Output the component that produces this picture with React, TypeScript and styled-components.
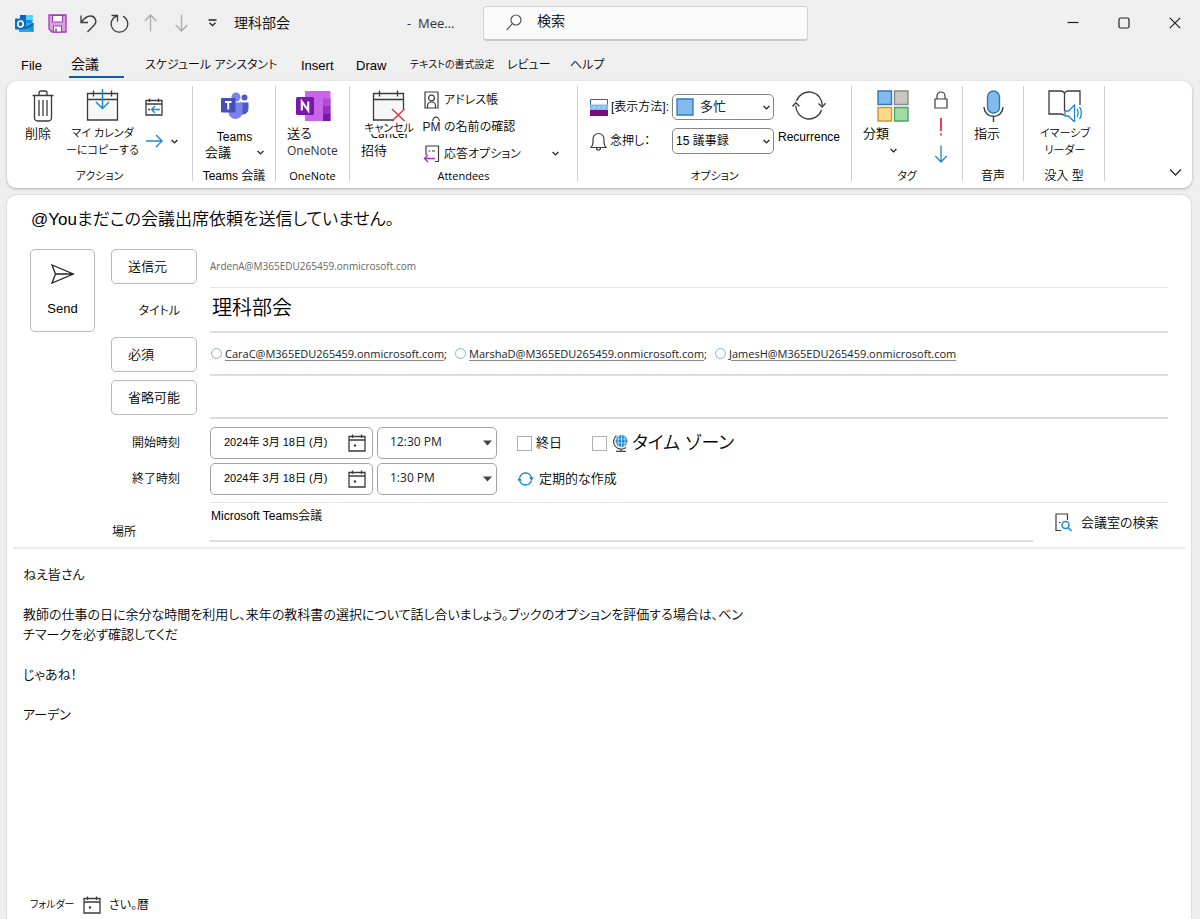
import React from "react";
import styled, { createGlobalStyle } from "styled-components";

const jp = `"Liberation Sans", "Noto Sans CJK JP", sans-serif`;
const ui = `"Open Sans", "Noto Sans", "Noto Sans CJK JP", sans-serif`;

const GlobalStyle = createGlobalStyle`
  *, *::before, *::after { box-sizing: border-box; }
  body {
    margin: 0;
    background: #efefef;
    color: #000;
    font-family: ${jp};
    font-size: 13px;
    font-weight: 350;
    line-height: 16px;
    font-feature-settings: "palt";
  }
  button, input, select, textarea {
    margin: 0;
    padding: 0;
    border: 0;
    border-radius: 0;
    background: none;
    color: inherit;
    font: inherit;
    font-feature-settings: "palt";
    outline: none;
  }
  button { cursor: pointer; white-space: nowrap; }
  svg { display: block; flex: none; }
`;

const Page = styled.div`
  display: flex;
  flex-direction: column;
  min-height: 100vh;
`;

/* ---------- title bar ---------- */

const TitleBar = styled.header`
  display: grid;
  grid-template-columns: 483px 325px 1fr;
  height: 46px;
  align-items: center;
`;

const QuickAccess = styled.div`
  display: flex;
  align-items: center;
  padding-left: 7px;
`;

const QuickButton = styled.button<{ $wide?: boolean }>`
  display: flex;
  justify-content: center;
  width: ${(p) => (p.$wide ? "35px" : "31px")};
`;

const DocTitle = styled.span`
  width: 179px;
  padding-left: 6px;
  font-size: 14px;
`;

const DocKind = styled.span`
  font-family: ${ui};
  font-size: 13px;
  font-weight: 400;
  color: #333;
  white-space: pre;
`;

const SearchBox = styled.label`
  display: flex;
  align-items: center;
  gap: 15px;
  height: 35px;
  padding-left: 22px;
  border: 1px solid #d2d2d2;
  border-bottom: 2px solid #c8c8c8;
  border-radius: 4px;
  background: #fafafa;
`;

const SearchInput = styled.input`
  flex: 1;
  min-width: 0;
  height: 28px;
  padding-bottom: 4px;
  font-size: 14px;
  &::placeholder { color: #000; opacity: 1; }
`;

const WindowControls = styled.div`
  display: flex;
  justify-content: flex-end;
`;

const WindowButton = styled.button`
  display: flex;
  justify-content: center;
  width: 51px;
`;

/* ---------- tabs ---------- */

const Tabs = styled.nav`
  display: grid;
  grid-template-columns: 48px 76px 156px 55px 54px 97px 63px auto;
  justify-content: start;
  padding-left: 21px;
  height: 35px;
  align-items: start;
`;

const Tab = styled.button<{ $active?: boolean; $small?: boolean }>`
  justify-self: start;
  height: 32px;
  min-width: ${(p) => (p.$active ? "55px" : "0")};
  padding: ${(p) => (p.$active ? "6px 2px 0" : "8px 0 0")};
  border-bottom: 2px solid ${(p) => (p.$active ? "#0f5ab4" : "transparent")};
  font-size: ${(p) => (p.$active ? "14px" : p.$small ? "10px" : "12px")};
  text-align: left;
`;

const LatinTab = styled(Tab)`
  padding-top: 9px;
  font-size: 13px;
`;

/* ---------- ribbon ---------- */

const Ribbon = styled.section`
  display: flex;
  margin: 0 8px 7px 7px;
  padding: 5px 0 7px;
  border-radius: 9px;
  background: #fff;
  box-shadow: 0 1px 3px rgba(0, 0, 0, 0.28);
`;

const Group = styled.div<{ $width: number }>`
  display: flex;
  flex-direction: column;
  justify-content: space-between;
  width: ${(p) => p.$width}px;
  height: 95px;
  border-right: 1px solid #cfcfcf;
`;

const GroupBody = styled.div<{ $pad: number; $gap?: number }>`
  display: flex;
  align-items: flex-start;
  gap: ${(p) => p.$gap ?? 0}px;
  padding-left: ${(p) => p.$pad}px;
`;

const GroupLabel = styled.div<{ $ui?: boolean; $kana?: boolean }>`
  height: 12px;
  line-height: 14px;
  text-align: center;
  white-space: nowrap;
  font-family: ${(p) => (p.$ui ? ui : jp)};
  font-size: ${(p) => (p.$kana || p.$ui ? "11px" : "12px")};
  font-weight: ${(p) => (p.$ui ? 400 : 350)};
`;

const Tool = styled.button<{ $width: number }>`
  display: flex;
  flex-direction: column;
  align-items: center;
  width: ${(p) => p.$width}px;
  padding-top: 3px;
`;

const ToolIcon = styled.span`
  display: flex;
  align-items: center;
  justify-content: center;
  height: 33px;
`;

const ToolLabel = styled.span<{ $left?: boolean; $low?: boolean; $kana?: boolean }>`
  align-self: ${(p) => (p.$left ? "stretch" : "center")};
  padding-top: ${(p) => (p.$low ? "8px" : "3px")};
  font-size: ${(p) => (p.$kana ? "11px" : "13px")};
  line-height: ${(p) => (p.$low ? "14px" : "17px")};
  text-align: ${(p) => (p.$left ? "left" : "center")};
`;

const LatinLabel = styled.span`
  display: block;
  font-size: 12px;
  text-align: center;
`;

const CaretLine = styled.span<{ $center?: boolean }>`
  display: flex;
  align-items: center;
  justify-content: ${(p) => (p.$center ? "center" : "space-between")};
  height: 17px;
`;

const UiText = styled.span`
  font-family: ${ui};
  font-size: 12px;
  font-weight: 400;
  color: #333;
`;

const CancelLabel = styled.span`
  display: block;
  font-size: 11px;
  line-height: 12px;
`;

const CancelUnder = styled.span`
  display: flex;
  align-items: flex-end;
  align-self: center;
  height: 7px;
  overflow: hidden;
  font-family: ${ui};
  font-size: 12px;
  font-weight: 400;
  line-height: 14px;
`;

const InviteLabel = styled.span`
  align-self: flex-start;
  font-size: 13px;
  line-height: 20px;
`;

const IconColumn = styled.div`
  display: flex;
  flex-direction: column;
`;

const IconRow = styled.button<{ $tall?: boolean }>`
  display: flex;
  align-items: center;
  gap: 8px;
  height: ${(p) => (p.$tall ? "34px" : "27px")};
`;

const TopPad = styled.div`
  display: flex;
  flex-direction: column;
  padding-top: 4px;
`;

const ListRow = styled.button`
  display: flex;
  align-items: center;
  gap: 4px;
  width: 136px;
  height: 27px;
  font-size: 12px;
  text-align: left;
`;

const Slot = styled.span`
  display: flex;
  align-items: center;
  justify-content: center;
  width: 17px;
`;

const Grow = styled.span`
  flex: 1;
`;

const CheckNames = styled.span`
  position: relative;
  font-size: 12px;
  color: #14143c;
  svg { position: absolute; left: 9px; top: -3px; }
`;

const OptionRow = styled.div`
  display: grid;
  grid-template-columns: 82px 102px;
  align-items: center;
  height: 34px;
`;

const OptionLabel = styled.label`
  display: flex;
  align-items: center;
  gap: 3px;
  font-size: 12px;
  white-space: nowrap;
`;

const OptionBox = styled.span<{ $text?: boolean }>`
  display: flex;
  align-items: center;
  gap: 6px;
  height: 26px;
  padding: 0 3px;
  border: 1px solid #858585;
  border-radius: 5px;
  background: #fff;
  font-size: ${(p) => (p.$text ? "12px" : "13px")};
`;

const BareSelect = styled.select`
  flex: 1;
  min-width: 0;
  height: 20px;
  appearance: none;
`;

const CollapseCell = styled.div`
  display: flex;
  flex: 1;
  align-items: flex-end;
  justify-content: flex-end;
  padding: 0 10px 2px 0;
`;

/* ---------- meeting form ---------- */

const Card = styled.main`
  display: flex;
  flex: 1;
  flex-direction: column;
  margin: 0 9px 0 7px;
  border-radius: 9px 9px 0 0;
  background: #fff;
  box-shadow: 0 0 2px rgba(0, 0, 0, 0.25);
`;

const Notice = styled.h1`
  margin: 0;
  padding: 0 24px;
  font-size: 17px;
  font-weight: 350;
  line-height: 50px;
`;

const FormGrid = styled.div<{ $top?: number; $bottom?: number }>`
  display: grid;
  grid-template-columns: 65px 86px 1fr;
  column-gap: 16px;
  align-items: center;
  padding: ${(p) => p.$top ?? 0}px 23px ${(p) => p.$bottom ?? 0}px 23px;
`;

const SendButton = styled.button`
  grid-row: span 2;
  align-self: end;
  display: flex;
  flex-direction: column;
  align-items: center;
  justify-content: center;
  gap: 17px;
  height: 83px;
  margin-bottom: 1px;
  border: 1px solid #b8b8b8;
  border-radius: 5px;
`;

const FieldButton = styled.button`
  grid-column: 2;
  height: 35px;
  padding-left: 16px;
  border: 1px solid #b8b8b8;
  border-radius: 5px;
  text-align: left;
`;

const FieldLabel = styled.label`
  grid-column: 2;
  padding-right: 17px;
  font-size: 12px;
  text-align: right;
`;

const PlaceLabel = styled.label`
  grid-column: 2;
  align-self: end;
  padding: 0 0 2px 1px;
  font-size: 12px;
`;

const Field = styled.div<{ $soft?: boolean; $tall?: boolean }>`
  grid-column: 3;
  display: flex;
  align-items: center;
  min-width: 0;
  height: ${(p) => (p.$tall ? "45px" : "43px")};
  margin-left: -3px;
  border-bottom: ${(p) => (p.$soft ? "1px solid #e6e6e6" : "2px solid #dcdcdc")};
`;

const FromText = styled.span`
  font-family: ${ui};
  font-size: 10px;
  font-weight: 400;
  color: #666;
`;

const TitleInput = styled.input`
  flex: 1;
  min-width: 0;
  height: 30px;
  margin-bottom: 6px;
  padding-left: 2px;
  font-size: 20px;
`;

const Recipient = styled.span`
  display: flex;
  align-items: center;
  padding-right: 7px;
  font-family: ${ui};
  font-size: 11px;
  font-weight: 400;
  color: #222;
`;

const Presence = styled.span`
  width: 11px;
  height: 11px;
  margin: 0 3px 0 1px;
  border: 1px solid #86b4c8;
  border-radius: 50%;
`;

const RecipientLink = styled.a`
  color: inherit;
  text-decoration: underline;
  text-decoration-color: #8a8a8a;
  text-underline-offset: 2px;
`;

const TimeRow = styled.div`
  grid-column: 3;
  display: flex;
  align-items: center;
  height: 36px;
  margin-left: -3px;
`;

const PickerBox = styled.span<{ $width: number }>`
  display: flex;
  align-items: center;
  width: ${(p) => p.$width}px;
  height: 32px;
  margin-right: 4px;
  padding: 0 6px 0 13px;
  border: 1px solid #a3a3a3;
  border-radius: 5px;
`;

const TimeBox = styled(PickerBox)`
  padding: 0 4px 0 12px;
`;

const DateInput = styled.input`
  flex: 1;
  min-width: 0;
  height: 28px;
  padding-bottom: 4px;
  font-size: 11px;
  font-weight: 400;
`;

const TimeSelect = styled(BareSelect)`
  height: 26px;
  padding-bottom: 2px;
  font-family: ${ui};
  font-size: 12px;
  font-weight: 400;
  color: #222;
`;

const Check = styled.input`
  appearance: none;
  width: 15px;
  height: 15px;
  border: 1px solid #b0b0b0;
  background: #fff;
  &:checked { background: #0f6cbd; }
`;

const Extras = styled.div`
  display: flex;
  align-items: center;
  padding-left: 16px;
`;

const CheckLabel = styled.label<{ $large?: boolean }>`
  display: flex;
  align-items: center;
  gap: 4px;
  width: ${(p) => (p.$large ? "auto" : "75px")};
  font-size: ${(p) => (p.$large ? "18px" : "13px")};
  line-height: 24px;
  white-space: nowrap;
`;

const Globe = styled.span`
  padding-left: 2px;
`;

const InlineButton = styled.button`
  display: flex;
  align-items: center;
  gap: 5px;
`;

const PlaceRow = styled.div`
  grid-column: 3;
  display: flex;
  height: 40px;
  margin-left: -3px;
  border-top: 1px solid #e6e6e6;
`;

const PlaceInput = styled.input`
  flex: 1;
  min-width: 0;
  padding: 0 0 12px 1px;
  border-bottom: 2px solid #dcdcdc;
  font-size: 12px;
`;

const RoomFinder = styled.button`
  display: flex;
  align-items: center;
  gap: 9px;
  width: 113px;
  margin-left: 22px;
`;

const Divider = styled.hr`
  width: auto;
  margin: 5px 6px 0;
  border: 0;
  border-top: 2px solid #ececec;
`;

const Message = styled.textarea`
  flex: 1;
  min-height: 320px;
  margin: 16px 16px 0;
  resize: none;
  font-size: 13px;
  line-height: 20px;
`;

const Footer = styled.footer`
  display: flex;
  align-items: center;
  height: 28px;
  padding-left: 23px;
  font-size: 12px;
`;

const FooterFolder = styled.span`
  width: 53px;
  font-size: 10px;
`;

const FooterItem = styled.button`
  display: flex;
  align-items: center;
  gap: 8px;
`;

/* ---------- icons ---------- */

const ink = "#3b3b3b";
const blue = "#1f86d0";

const Caret = ({ size = 7 }: { size?: number }) => (
  <svg width={size} height={size} viewBox="0 0 8 8" fill="none" stroke="#222" strokeWidth={size > 8 ? 0.8 : 1.5}>
    <path d="M.7 2.2 4 5.6l3.3-3.4" />
  </svg>
);

const OutlookIcon = () => (
  <svg width="19" height="19" viewBox="0 0 19 19">
    <path d="M5 1h12.500v10H5z" fill="#1490df" />
    <path d="M11 1h6.500v5H11z" fill="#50d9ff" />
    <path d="M5 1h6v5H5z" fill="#0a63b4" />
    <path d="M4 9h14.500v9H4z" fill="#28a8ea" />
    <path d="m18.500 9-7 5 7 4z" fill="#1f8fd8" />
    <path d="M11 13.500 18.500 9v1.300L11.500 15z" fill="#0a4f91" />
    <rect x="0" y="4.500" width="11" height="11" rx="1" fill="#0f6cc4" />
    <ellipse cx="5.500" cy="10" rx="2.700" ry="3" fill="none" stroke="#fff" strokeWidth="1.600" />
  </svg>
);

const SaveIcon = () => (
  <svg width="19" height="19" viewBox="0 0 19 19">
    <path d="M1 1h17v17H4l-3-3z" fill="#d9a3e0" stroke="#a33bb0" strokeWidth="1.300" />
    <path d="M4.500 1.500h10V8h-10zM5.500 12h8v6h-8z" fill="#fff" stroke="#a33bb0" strokeWidth="1.100" />
    <path d="M8 14.500V18" stroke="#a33bb0" strokeWidth="1.500" />
  </svg>
);

const UndoIcon = () => (
  <svg width="19" height="19" viewBox="0 0 19 19" fill="none" stroke={ink} strokeWidth="1.300">
    <path d="M2 1.500v7h7M2.300 8.200C5 4.500 8 2 11.500 2a5.300 5.300 0 0 1 4 8.800L8.500 18" />
  </svg>
);

const RedoIcon = () => (
  <svg width="19" height="19" viewBox="0 0 19 19" fill="none" stroke={ink} strokeWidth="1.300">
    <path d="M1.500 1.500h6v6M7.300 1.900A8.300 8.300 0 1 0 13 2.400" />
  </svg>
);

const ArrowIcon = ({ dir, color = "#ababab", w = 13 }: { dir: "up" | "down"; color?: string; w?: number }) => (
  <svg width={w} height="18" viewBox="0 0 13 18" fill="none" stroke={color} strokeWidth="1.300">
    <path d={dir === "up" ? "M6.500 17.500V1M.800 7l5.700-6 5.700 6" : "M6.500.500V17M.800 11l5.700 6 5.700-6"} />
  </svg>
);

const CustomizeIcon = () => (
  <svg width="9" height="8" viewBox="0 0 9 8" fill="none" stroke="#222" strokeWidth="1.300">
    <path d="M.500 1h8M1.500 3.700l3 3 3-3" />
  </svg>
);

const SearchIcon = () => (
  <svg width="16" height="17" viewBox="0 0 16 17" fill="none" stroke="#555" strokeWidth="1.200">
    <circle cx="10" cy="6" r="5" />
    <path d="M6.300 9.700.700 16" />
  </svg>
);

const TrashIcon = () => (
  <svg width="22" height="32" viewBox="0 0 22 32" fill="none" stroke={ink} strokeWidth="1.300">
    <path d="M.500 5.500h21M7 5V3a2 2 0 0 1 2-2h4a2 2 0 0 1 2 2v2" />
    <path d="M2.500 5.500V28a3 3 0 0 0 3 3h11a3 3 0 0 0 3-3V5.500M7 10v16M11 10v16M15 10v16" />
  </svg>
);

const CalendarFrame = ({ children }: { children?: React.ReactNode }) => (
  <svg width="34" height="33" viewBox="0 0 34 33" fill="none" stroke={ink} strokeWidth="1.300">
    <path d="M1.500 4.500h30V31h-30z" fill="#f7f7f7" />
    <path d="M1.500 10.500h30M7.500 1.500v6M25.500 1.500v6" />
    {children}
  </svg>
);

const CopyCalendarIcon = () => (
  <CalendarFrame>
    <path d="M16.500 0v19M10 13l6.500 6.500L23 13" stroke={blue} strokeWidth="1.500" />
  </CalendarFrame>
);

const CancelIcon = () => (
  <CalendarFrame>
    <path d="M22 20h12v13H22z" fill="#fff" stroke="none" />
    <path d="m20 20 12.500 12M32.500 20 20 32" stroke="#e8343c" strokeWidth="1.500" />
  </CalendarFrame>
);

const SmallCalendarIcon = ({ arrow }: { arrow?: boolean }) => (
  <svg width="18" height="18" viewBox="0 0 18 18" fill="none" stroke={ink} strokeWidth="1.300">
    <path d="M1 2.500h16V17H1zM1 6h16M4.500.500v3.500M13.500.500v3.500" />
    {arrow ? (
      <path d="M15 11.500H7M10 8l-3.500 3.500L10 15" stroke={blue} strokeWidth="1.400" />
    ) : (
      <circle cx="7" cy="11.500" r="1.200" fill={ink} stroke="none" />
    )}
    {arrow && <circle cx="4" cy="11.500" r="1" fill={ink} stroke="none" />}
  </svg>
);

const ForwardIcon = () => (
  <svg width="18" height="14" viewBox="0 0 18 14" fill="none" stroke={blue} strokeWidth="1.400">
    <path d="M1 7h16M11 1l6 6-6 6" />
  </svg>
);

const TeamsIcon = () => (
  <svg width="28" height="28" viewBox="0 0 28 28">
    <circle cx="15" cy="5" r="4.500" fill="#7b83eb" />
    <circle cx="23.500" cy="5.500" r="3" fill="#5059c9" />
    <path d="M19 10.500h8.500V17a5.500 5.500 0 0 1-8.500 4.500z" fill="#5059c9" />
    <path d="M7.500 10.500h14V20a7 7 0 0 1-14 0z" fill="#7b83eb" />
    <rect x="0" y="6" width="14.500" height="14.500" rx="1.200" fill="#464eb8" />
    <path d="M4 10h6.500M7.250 10v7.500" stroke="#fff" strokeWidth="1.900" />
  </svg>
);

const OneNoteIcon = () => (
  <svg width="35" height="32" viewBox="0 0 35 32">
    <path d="M9 1h25.500v30H9z" fill="#ca64ea" />
    <path d="M27 8.500h7.500V16H27z" fill="#ae4bd5" />
    <path d="M27 16h7.500v7.500H27z" fill="#9332bf" />
    <path d="M27 23.500h7.500V31H27z" fill="#7719aa" />
    <rect x="0" y="7" width="18" height="18" rx="1.500" fill="#7719aa" />
    <path d="M5.800 20.500v-9l6.400 9v-9" fill="none" stroke="#fff" strokeWidth="2.100" />
  </svg>
);

const AddressIcon = () => (
  <svg width="15" height="18" viewBox="0 0 15 18" fill="none" stroke={ink} strokeWidth="1.200">
    <path d="M1 1h13v16H1zM3.500 17v-2.500c0-2 2-3.500 4-3.500s4 1.500 4 3.500V17" />
    <circle cx="7.500" cy="7" r="2.900" />
  </svg>
);

const NameHood = () => (
  <svg width="8" height="5" viewBox="0 0 8 5" fill="none" stroke={ink} strokeWidth="1.200">
    <path d="M.700 5a3.300 3.800 0 0 1 6.600 0" />
  </svg>
);

const ResponseIcon = () => (
  <svg width="17" height="18" viewBox="0 0 17 18" fill="none" stroke={ink} strokeWidth="1.200">
    <path d="M3 10V1h12.500v15.500H12" />
    <path d="M5.500 6h2M9 6h3" />
    <path d="M12 13.500H1.500M5 10l-3.500 3.500L5 17" stroke="#a637b5" strokeWidth="1.400" />
  </svg>
);

const ShowAsIcon = () => (
  <svg width="18" height="17" viewBox="0 0 18 17">
    <path d="M.500.500h17v6H.500z" fill="#fff" stroke="#1f6fb8" />
    <path d="M0 5.500h18V11H0z" fill="#7dbdec" />
    <path d="m3 9.500 2-2M8 9.500l2-2M13 9.500l2-2" stroke="#fff" strokeWidth="1" />
    <path d="M0 11h18v6H0z" fill="#7b0c7b" />
  </svg>
);

const BellIcon = () => (
  <svg width="17" height="19" viewBox="0 0 17 19" fill="none" stroke={ink} strokeWidth="1.200">
    <path d="M1 15.500c1.500-1.500 2-3 2-5V7a5.500 5.500 0 0 1 11 0v3.500c0 2 .500 3.500 2 5zM6.500 16a2 2 0 0 0 4 0" />
  </svg>
);

const BusyIcon = () => (
  <svg width="18" height="18" viewBox="0 0 18 18">
    <path d="M1 1h16v16H1z" fill="#83bcec" stroke="#2b78c0" strokeWidth="1.300" />
  </svg>
);

const RecurrenceIcon = () => (
  <svg width="34" height="29" viewBox="0 0 34 29" fill="none" stroke={ink} strokeWidth="1.300">
    <path d="M4.500 10A13.200 13.200 0 0 1 30.200 14.500M29.500 19A13.200 13.200 0 0 1 3.800 14.500" />
    <path d="m26.500 12.500 3.700 3.500 3.300-3.800M.500 15.500l3.300-3.800 3.700 3.500" />
  </svg>
);

const CategoriesIcon = () => (
  <svg width="32" height="32" viewBox="0 0 32 32" strokeWidth="1.400">
    <path d="M1 1h13.500v13.500H1z" fill="#83bcec" stroke="#2b78c0" />
    <path d="M17.500 1H31v13.500H17.500z" fill="#c8c6c4" stroke="#8a8886" />
    <path d="M1 17.500h13.500V31H1z" fill="#fbdb8d" stroke="#dd8f2f" />
    <path d="M17.500 17.500H31V31H17.500z" fill="#a1dda5" stroke="#4aa564" />
  </svg>
);

const LockIcon = () => (
  <svg width="14" height="18" viewBox="0 0 14 18" fill="none" stroke={ink} strokeWidth="1.200">
    <path d="M1 8h12v9H1zM3 8V5a4 4 0 0 1 8 0v3" />
  </svg>
);

const ImportantIcon = () => (
  <svg width="14" height="18" viewBox="0 0 14 18" stroke="#e81123" strokeWidth="1.600">
    <path d="M7 0v13M7 15.500v2" />
  </svg>
);

const MicIcon = () => (
  <svg width="21" height="32" viewBox="0 0 21 32" fill="none" stroke={ink} strokeWidth="1.400">
    <rect x="4.500" y="1" width="12" height="22" rx="6" fill="#83bcec" stroke="#2b78c0" />
    <path d="M1 17a9.500 9.500 0 0 0 19 0M10.500 26.500V32" />
  </svg>
);

const ReaderIcon = () => (
  <svg width="35" height="33" viewBox="0 0 35 33" fill="none" stroke={ink} strokeWidth="1.300">
    <path d="M16.500 26.500c-1-1-2-1.500-4-1.500H1V2h11.500c2 0 4 1 4 3 0-2 2-3 4-3H32v14M16.500 5v17" />
    <path d="M17 22h3.500l6-6v17l-6-6H17zM29 20c1.500 2 1.500 6 0 8M31.500 18c2.500 3 2.500 9 0 12" stroke={blue} />
  </svg>
);

const SendIcon = () => (
  <svg width="24" height="20" viewBox="0 0 24 20" fill="none" stroke="#222" strokeWidth="1.300">
    <path d="M1 1l21.500 9L1 19l3.500-9zM4.500 10H22" />
  </svg>
);

const TriangleIcon = () => (
  <svg width="9" height="6" viewBox="0 0 9 6">
    <path d="M0 .500h9l-4.500 5z" fill="#444" />
  </svg>
);

const GlobeIcon = () => (
  <svg width="15" height="18" viewBox="0 0 15 18" fill="none" stroke="#444" strokeWidth="1.200">
    <circle cx="8.500" cy="7" r="6" fill="#2288cf" stroke="none" />
    <path d="M3 5h11M3 9h11M8.500 1v12M6 2c-1.200 3-1.200 7 0 10M11 2c1.200 3 1.200 7 0 10" stroke="#cfe8f8" strokeWidth=".7" />
    <path d="M3.500 1.500a7.300 7.300 0 0 0 9.500 12M8 15v2M3 17.300h10" />
  </svg>
);

const RepeatIcon = () => (
  <svg width="17" height="14" viewBox="0 0 17 14" fill="none" stroke={blue} strokeWidth="1.500">
    <path d="M2.700 5.500A6 6 0 0 1 14.500 7M14.300 8.500A6 6 0 0 1 2.500 7" />
    <path d="M12 5.500h5l-2.500 3zM0 8.500h5L2.500 5.500z" fill={blue} stroke="none" />
  </svg>
);

const RoomIcon = () => (
  <svg width="17" height="19" viewBox="0 0 17 19" fill="none" stroke={ink} strokeWidth="1.200">
    <path d="M6 17.500H1V1h11.500v6M4 9.500h1.500" />
    <circle cx="10.500" cy="12" r="3.500" stroke={blue} strokeWidth="1.500" />
    <path d="m13 14.500 3.500 3.500" stroke={blue} strokeWidth="1.500" />
  </svg>
);

/* ---------- data ---------- */

const recipients = [
  "CaraC@M365EDU265459.onmicrosoft.com",
  "MarshaD@M365EDU265459.onmicrosoft.com",
  "JamesH@M365EDU265459.onmicrosoft.com",
];

const message = `ねえ皆さん

教師の仕事の日に余分な時間を利用し、来年の教科書の選択について話し合いましょう。ブックのオプションを評価する場合は、ベン
チマークを必ず確認してくだ

じゃあね！

アーデン`;

const DateTime = ({ id, date, time, name }: { id: string; date: string; time: string; name: string }) => (
  <>
    <PickerBox $width={163}>
      <DateInput id={id} defaultValue={date} />
      <button aria-label={`${name} カレンダー`}><SmallCalendarIcon /></button>
    </PickerBox>
    <TimeBox $width={120}>
      <TimeSelect aria-label={`${name} 時間`}><option>{time}</option></TimeSelect>
      <TriangleIcon />
    </TimeBox>
  </>
);

export default function App() {
  return (
    <Page>
      <GlobalStyle />
      <TitleBar>
        <QuickAccess>
          <QuickButton $wide aria-label="Outlook"><OutlookIcon /></QuickButton>
          <QuickButton aria-label="保存"><SaveIcon /></QuickButton>
          <QuickButton aria-label="元に戻す"><UndoIcon /></QuickButton>
          <QuickButton aria-label="やり直し"><RedoIcon /></QuickButton>
          <QuickButton aria-label="前へ"><ArrowIcon dir="up" /></QuickButton>
          <QuickButton aria-label="次へ"><ArrowIcon dir="down" /></QuickButton>
          <QuickButton aria-label="カスタマイズ"><CustomizeIcon /></QuickButton>
          <DocTitle>理科部会</DocTitle>
          <DocKind>-  Mee...</DocKind>
        </QuickAccess>
        <SearchBox>
          <SearchIcon />
          <SearchInput placeholder="検索" aria-label="検索" />
        </SearchBox>
        <WindowControls>
          <WindowButton aria-label="最小化">
            <svg width="12" height="12" viewBox="0 0 12 12" stroke="#222" strokeWidth="1.200"><path d="M.500 5.500h11" /></svg>
          </WindowButton>
          <WindowButton aria-label="最大化">
            <svg width="12" height="12" viewBox="0 0 12 12" fill="none" stroke="#222" strokeWidth="1.200"><rect x="1" y="1" width="10" height="10" rx="1.500" /></svg>
          </WindowButton>
          <WindowButton aria-label="閉じる">
            <svg width="12" height="12" viewBox="0 0 12 12" stroke="#222" strokeWidth="1.200"><path d="m.800.800 10.400 10.400M11.200.800.800 11.200" /></svg>
          </WindowButton>
        </WindowControls>
      </TitleBar>

      <Tabs>
        <LatinTab>File</LatinTab>
        <Tab $active>会議</Tab>
        <Tab>スケジュール アシスタント</Tab>
        <LatinTab>Insert</LatinTab>
        <LatinTab>Draw</LatinTab>
        <Tab $small>テキストの書式設定</Tab>
        <Tab>レビュー</Tab>
        <Tab>ヘルプ</Tab>
      </Tabs>

      <Ribbon>
        <Group $width={186}>
          <GroupBody $pad={18} $gap={6}>
            <Tool $width={35}>
              <ToolIcon><TrashIcon /></ToolIcon>
              <ToolLabel $left>削除</ToolLabel>
            </Tool>
            <Tool $width={73}>
              <ToolIcon><CopyCalendarIcon /></ToolIcon>
              <ToolLabel $kana>マイ カレンダ<br />ーにコピーする</ToolLabel>
            </Tool>
            <TopPad>
              <IconRow $tall aria-label="予定表"><SmallCalendarIcon arrow /></IconRow>
              <IconRow $tall aria-label="転送"><ForwardIcon /><Caret /></IconRow>
            </TopPad>
          </GroupBody>
          <GroupLabel $kana>アクション</GroupLabel>
        </Group>

        <Group $width={83}>
          <GroupBody $pad={12}>
            <Tool $width={59}>
              <ToolIcon><TeamsIcon /></ToolIcon>
              <ToolLabel $left $low>
                <LatinLabel>Teams</LatinLabel>
                <CaretLine>会議<Caret /></CaretLine>
              </ToolLabel>
            </Tool>
          </GroupBody>
          <GroupLabel>Teams 会議</GroupLabel>
        </Group>

        <Group $width={74}>
          <GroupBody $pad={11}>
            <Tool $width={52}>
              <ToolIcon><OneNoteIcon /></ToolIcon>
              <ToolLabel $left>送る<br /><UiText>OneNote</UiText></ToolLabel>
            </Tool>
          </GroupBody>
          <GroupLabel $ui>OneNote</GroupLabel>
        </Group>

        <Group $width={228}>
          <GroupBody $pad={11} $gap={6}>
            <Tool $width={56}>
              <ToolIcon><CancelIcon /></ToolIcon>
              <CancelLabel>キャンセル</CancelLabel>
              <CancelUnder>Cancel</CancelUnder>
              <InviteLabel>招待</InviteLabel>
            </Tool>
            <IconColumn>
              <ListRow><Slot><AddressIcon /></Slot>アドレス帳</ListRow>
              <ListRow><Slot><CheckNames>PM<NameHood /></CheckNames></Slot>の名前の確認</ListRow>
              <ListRow><Slot><ResponseIcon /></Slot>応答オプション<Grow /><Caret /></ListRow>
            </IconColumn>
          </GroupBody>
          <GroupLabel $ui>Attendees</GroupLabel>
        </Group>

        <Group $width={274}>
          <GroupBody $pad={12} $gap={4}>
            <TopPad>
              <OptionRow>
                <OptionLabel htmlFor="show-as"><ShowAsIcon />[表示方法]:</OptionLabel>
                <OptionBox>
                  <BusyIcon />
                  <BareSelect id="show-as"><option>多忙</option></BareSelect>
                  <Caret />
                </OptionBox>
              </OptionRow>
              <OptionRow>
                <OptionLabel htmlFor="reminder"><BellIcon />念押し：</OptionLabel>
                <OptionBox $text>
                  <BareSelect id="reminder"><option>15 議事録</option></BareSelect>
                  <Caret />
                </OptionBox>
              </OptionRow>
            </TopPad>
            <Tool $width={62}>
              <ToolIcon><RecurrenceIcon /></ToolIcon>
              <ToolLabel $low><LatinLabel>Recurrence</LatinLabel></ToolLabel>
            </Tool>
          </GroupBody>
          <GroupLabel $kana>オプション</GroupLabel>
        </Group>

        <Group $width={111}>
          <GroupBody $pad={11} $gap={11}>
            <Tool $width={60}>
              <ToolIcon><CategoriesIcon /></ToolIcon>
              <ToolLabel $left>分類<CaretLine $center><Caret /></CaretLine></ToolLabel>
            </Tool>
            <IconColumn>
              <IconRow aria-label="非公開"><LockIcon /></IconRow>
              <IconRow aria-label="重要度 - 高"><ImportantIcon /></IconRow>
              <IconRow aria-label="重要度 - 低"><ArrowIcon dir="down" color={blue} w={14} /></IconRow>
            </IconColumn>
          </GroupBody>
          <GroupLabel $kana>タグ</GroupLabel>
        </Group>

        <Group $width={61}>
          <GroupBody $pad={11}>
            <Tool $width={39}>
              <ToolIcon><MicIcon /></ToolIcon>
              <ToolLabel $left>指示</ToolLabel>
            </Tool>
          </GroupBody>
          <GroupLabel>音声</GroupLabel>
        </Group>

        <Group $width={81}>
          <GroupBody $pad={10}>
            <Tool $width={62}>
              <ToolIcon><ReaderIcon /></ToolIcon>
              <ToolLabel $kana>イマーシブ<br />リーダー</ToolLabel>
            </Tool>
          </GroupBody>
          <GroupLabel>没入 型</GroupLabel>
        </Group>

        <CollapseCell>
          <button aria-label="リボンを折りたたむ"><Caret size={13} /></button>
        </CollapseCell>
      </Ribbon>

      <Card>
        <Notice>@Youまだこの会議出席依頼を送信していません。</Notice>
        <FormGrid>
          <SendButton><SendIcon />Send</SendButton>
          <FieldButton>送信元</FieldButton>
          <Field $soft><FromText>ArdenA@M365EDU265459.onmicrosoft.com</FromText></Field>
          <FieldLabel htmlFor="subject">タイトル</FieldLabel>
          <Field $tall><TitleInput id="subject" defaultValue="理科部会" /></Field>
          <FieldButton>必須</FieldButton>
          <Field>
            {recipients.map((r, i) => (
              <Recipient key={r}>
                <Presence />
                <RecipientLink href={`mailto:${r}`}>{r}</RecipientLink>
                {i < recipients.length - 1 ? ";" : ""}
              </Recipient>
            ))}
          </Field>
          <FieldButton>省略可能</FieldButton>
          <Field />
        </FormGrid>

        <FormGrid $top={6} $bottom={5}>
          <FieldLabel htmlFor="start">開始時刻</FieldLabel>
          <TimeRow>
            <DateTime id="start" name="開始" date="2024年 3月 18日 (月)" time="12:30 PM" />
            <Extras>
              <CheckLabel><Check type="checkbox" />終日</CheckLabel>
              <CheckLabel $large><Check type="checkbox" /><Globe><GlobeIcon /></Globe>タイム ゾーン</CheckLabel>
            </Extras>
          </TimeRow>
          <FieldLabel htmlFor="end">終了時刻</FieldLabel>
          <TimeRow>
            <DateTime id="end" name="終了" date="2024年 3月 18日 (月)" time="1:30 PM" />
            <Extras>
              <InlineButton><RepeatIcon />定期的な作成</InlineButton>
            </Extras>
          </TimeRow>
        </FormGrid>

        <FormGrid>
          <PlaceLabel htmlFor="place">場所</PlaceLabel>
          <PlaceRow>
            <PlaceInput id="place" defaultValue="Microsoft Teams会議" />
            <RoomFinder><RoomIcon />会議室の検索</RoomFinder>
          </PlaceRow>
        </FormGrid>

        <Divider />
        <Message aria-label="本文" defaultValue={message} />
        <Footer>
          <FooterFolder>フォルダー</FooterFolder>
          <FooterItem><SmallCalendarIcon />さい。暦</FooterItem>
        </Footer>
      </Card>
    </Page>
  );
}
